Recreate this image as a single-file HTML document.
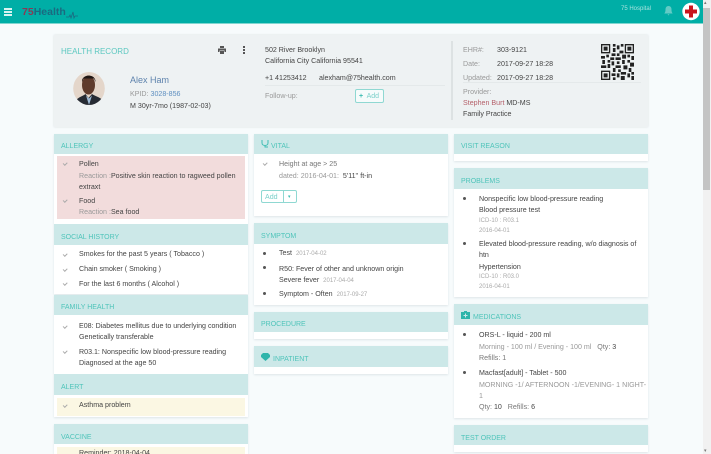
<!DOCTYPE html>
<html><head><meta charset="utf-8"><style>
html,body{margin:0;padding:0}
body{width:711px;height:454px;overflow:hidden;position:relative;background:#f7fbfc;font-family:"Liberation Sans",sans-serif;font-size:7.1px;color:#444}
#w{position:absolute;left:0;top:0;width:711px;height:454px;overflow:hidden;filter:blur(.3px)}
.b{position:absolute}
.t{position:absolute;white-space:nowrap;line-height:10px;height:10px;margin-top:1px}
.g{color:#999}.h{color:#4fc4ba;font-size:7px;margin-top:2px}.s{font-size:6px;color:#aaa}
.c{position:absolute;background:#fff;box-shadow:0 1px 2px #dde6e8}
.hd{position:absolute;background:#cce8e8}
.ck{position:absolute;width:3px;height:1.5px;border-left:1px solid #aaa;border-bottom:1px solid #aaa;transform:rotate(-45deg)}
.d{position:absolute;width:3px;height:3px;border-radius:50%;background:#555}
</style></head><body><div id="w">
<div class="b" style="left:0;top:0;width:703px;height:23px;background:#00aea6;border-bottom:1px solid #7fd6d0"></div>
<div class="b" style="left:4px;top:8px;width:8px;height:2px;background:#d8f3f1"></div>
<div class="b" style="left:4px;top:11px;width:8px;height:2px;background:#d8f3f1"></div>
<div class="b" style="left:4px;top:14px;width:8px;height:2px;background:#d8f3f1"></div>
<div class="t" style="left:22px;top:6px;font-size:10.5px;font-weight:bold;line-height:11px;height:11px"><span style="color:#8a3a55">75</span><span style="color:#1b6a80">Health</span></div>
<svg class="b" style="left:65px;top:10px" width="14" height="10"><path d="M1 7H4L5 5L6 8L8 2L9 8L10 6H13" fill="none" stroke="#1b6a80" stroke-width=".8"/></svg>
<div class="t" style="left:621px;top:3px;color:#a9e3df;font-size:6px">75 Hospital</div>
<svg class="b" style="left:664px;top:6px" width="9" height="10"><path d="M4.500 0C2.500 0 1.500 1.500 1.500 3.500C1.500 6 .8 7 .3 7.500H8.700C8.200 7 7.500 6 7.500 3.500C7.500 1.500 6.500 0 4.500 0ZM3.500 8.300H5.500L4.500 9.500Z" fill="#63cbc5"/></svg>
<svg class="b" style="left:682px;top:2px" width="18" height="19"><circle cx="9" cy="9.500" r="8.700" fill="#fff"/><path d="M7 3.500H11V7.500H15V11.500H11V15.500H7V11.500H3V7.500H7Z" fill="#c8161d"/></svg>
<div class="b" style="left:703px;top:0;width:8px;height:454px;background:#f1f1f1"></div>
<div class="b" style="left:703px;top:8px;width:7px;height:182px;background:#c4c4c4"></div>
<div class="t" style="left:704px;top:-3px;font-size:5px;color:#777">▴</div>
<div class="t" style="left:704px;top:445px;font-size:5px;color:#777">▾</div>

<div class="b" style="left:54px;top:35px;width:594px;height:92px;background:#eef2f3;box-shadow:0 0 2px #d8dfe0"></div>
<div class="t" style="left:61px;top:46px;font-size:8px;color:#5cc8c0">HEALTH RECORD</div>
<svg class="b" style="left:218px;top:46px" width="8" height="8"><path d="M2 0H6V2H2ZM0 2.500H8V6H6.500V4.500H1.500V6H0ZM2 5H6V8H2Z" fill="#555"/></svg>
<div class="b" style="left:243px;top:46px;width:2px;height:2px;background:#555;box-shadow:0 3px #555,0 6px #555"></div>
<svg class="b" style="left:73px;top:72px" width="32" height="35"><defs><clipPath id="a"><ellipse cx="16" cy="16.500" rx="15.800" ry="16.500"/></clipPath></defs><g clip-path="url(#a)"><rect width="32" height="35" fill="#e4d6ca"/><ellipse cx="15.500" cy="13" rx="6.500" ry="9.500" fill="#5f3b2c"/><path d="M9 10C8 2 23 1 22.500 10L21 6.500H10.500Z" fill="#1f1613"/><path d="M3 35V28C6 25 10 24 12.500 22L15.500 26L19 22C22 24 26 25 30 28V35Z" fill="#262b33"/><path d="M13 23.500L16 33L19 23.500L16 26.500Z" fill="#9fbbd6"/></g></svg>
<div class="t" style="left:130px;top:74px;font-size:9px;color:#5e83ad">Alex Ham</div>
<div class="t g" style="left:130px;top:88px">KPID: <span style="color:#5e8fc0">3028-856</span></div>
<div class="t" style="left:130px;top:100px">M 30yr-7mo (1987-02-03)</div>
<div class="t" style="left:265px;top:44px">502 River Brooklyn</div>
<div class="t" style="left:265px;top:55px">California City California 95541</div>
<div class="t" style="left:265px;top:72px">+1 41253412</div>
<div class="t" style="left:319px;top:72px">alexham@75health.com</div>
<div class="b" style="left:265px;top:85px;width:180px;height:1px;background:#e4e9ea"></div>
<div class="t g" style="left:265px;top:90px">Follow-up:</div>
<div class="b" style="left:355px;top:89px;width:27px;height:12px;border:1px solid #8fd8d2;border-radius:2px;background:#f6fbfb"></div>
<div class="t" style="left:359px;top:91px;color:#3cbcb2;font-size:7px"><b>+</b>&nbsp; <span style="color:#7bd0ca">Add</span></div>
<div class="b" style="left:451px;top:41px;width:2px;height:79px;background:#dde2e3"></div>
<div class="t g" style="left:463px;top:44px">EHR#:</div><div class="t" style="left:497px;top:44px">303-9121</div>
<div class="t g" style="left:463px;top:58px">Date:</div><div class="t" style="left:497px;top:58px">2017-09-27 18:28</div>
<div class="t g" style="left:463px;top:72px">Updated:</div><div class="t" style="left:497px;top:72px">2017-09-27 18:28</div>
<div class="b" style="left:463px;top:82px;width:178px;height:1px;background:#e4e9ea"></div>
<div class="t g" style="left:463px;top:86px">Provider:</div>
<div class="t" style="left:463px;top:97px"><span style="color:#b5606a">Stephen Burt</span> MD-MS</div>
<div class="t" style="left:463px;top:108px">Family Practice</div>
<svg class="b" style="left:601px;top:44px" width="33" height="36" viewBox="0 0 25 27" preserveAspectRatio="none"><rect width="25" height="27" fill="#eef2f3"/><path fill="#222" d="M0 0h7v7H0zM18 0h7v7h-7zM0 20h7v7H0zM9 0h2v2H9zM12 1h2v3h-2zM15 0h2v2h-2zM9 3h2v3H9zM14 5h3v2h-3zM8 7h3v2H8zM12 7h2v2h-2zM0 9h3v2H0zM4 8h2v2H4zM7 10h3v2H7zM11 10h4v2h-4zM16 8h3v3h-3zM20 8h2v2h-2zM23 9h2v3h-2zM1 12h2v3H1zM5 12h2v2H5zM8 13h2v3H8zM12 13h2v2h-2zM16 12h2v3h-2zM20 12h2v2h-2zM0 16h4v2H0zM5 15h2v3H5zM11 16h4v2h-4zM17 16h3v3h-3zM22 14h3v3h-3zM9 18h2v3H9zM13 19h2v2h-2zM21 18h2v3h-2zM8 22h3v2H8zM12 22h2v3h-2zM15 21h4v2h-4zM20 22h2v3h-2zM23 21h2v2h-2zM9 25h2v2H9zM15 24h3v3h-3zM23 24h2v3h-2z"/><path fill="#eef2f3" d="M1 1h5v5H1zM19 1h5v5h-5zM1 21h5v5H1z"/><path fill="#222" d="M2 2h3v3H2zM20 2h3v3h-3zM2 22h3v3H2z"/></svg>

<!-- left column -->
<div class="c" style="left:54px;top:134px;width:194px;height:160px"></div>
<div class="hd" style="left:54px;top:134px;width:194px;height:20px"></div>
<div class="t h" style="left:61px;top:140px">ALLERGY</div>
<div class="b" style="left:57px;top:156px;width:188px;height:63px;background:#f2dcdc"></div>
<div class="ck" style="left:63px;top:162px"></div><div class="t" style="left:79px;top:158px">Pollen</div>
<div class="t" style="left:79px;top:170px"><span class="g">Reaction :</span>Positive skin reaction to ragweed pollen</div>
<div class="t" style="left:79px;top:181px">extraxt</div>
<div class="ck" style="left:63px;top:199px"></div><div class="t" style="left:79px;top:195px">Food</div>
<div class="t" style="left:79px;top:206px"><span class="g">Reaction :</span>Sea food</div>
<div class="hd" style="left:54px;top:224px;width:194px;height:21px"></div>
<div class="t h" style="left:61px;top:231px">SOCIAL HISTORY</div>
<div class="ck" style="left:63px;top:253px"></div><div class="t" style="left:79px;top:248px">Smokes for the past 5 years ( Tobacco )</div>
<div class="ck" style="left:63px;top:268px"></div><div class="t" style="left:79px;top:263px">Chain smoker ( Smoking )</div>
<div class="ck" style="left:63px;top:282px"></div><div class="t" style="left:79px;top:278px">For the last 6 months ( Alcohol )</div>

<div class="c" style="left:54px;top:295px;width:194px;height:122px"></div>
<div class="hd" style="left:54px;top:295px;width:194px;height:20px"></div>
<div class="t h" style="left:61px;top:301px">FAMILY HEALTH</div>
<div class="ck" style="left:63px;top:325px"></div><div class="t" style="left:79px;top:320px">E08: Diabetes mellitus due to underlying condition</div>
<div class="t" style="left:79px;top:331px">Genetically transferable</div>
<div class="ck" style="left:63px;top:350px"></div><div class="t" style="left:79px;top:346px">R03.1: Nonspecific low blood-pressure reading</div>
<div class="t" style="left:79px;top:357px">Diagnosed at the age 50</div>
<div class="hd" style="left:54px;top:374px;width:194px;height:21px"></div>
<div class="t h" style="left:61px;top:381px">ALERT</div>
<div class="b" style="left:57px;top:398px;width:188px;height:18px;background:#fbf7e3"></div>
<div class="ck" style="left:63px;top:404px"></div><div class="t" style="left:79px;top:399px">Asthma problem</div>

<div class="c" style="left:54px;top:424px;width:194px;height:30px"></div>
<div class="hd" style="left:54px;top:424px;width:194px;height:20px"></div>
<div class="t h" style="left:61px;top:431px">VACCINE</div>
<div class="b" style="left:57px;top:447px;width:188px;height:7px;background:#fbf7e3;overflow:hidden"></div>
<div class="t" style="left:79px;top:447px;height:7px;overflow:hidden">Reminder: 2018-04-04</div>

<!-- middle column -->
<div class="c" style="left:254px;top:134px;width:194px;height:82px"></div>
<div class="hd" style="left:254px;top:134px;width:194px;height:20px"></div>
<svg class="b" style="left:261px;top:139px" width="8" height="9"><path d="M1 1V4C1 6 3 6.500 4 6.500C5 6.500 7 6 7 4V1M4 6.500V8H7" fill="none" stroke="#3fbdb3" stroke-width="1"/></svg>
<div class="t h" style="left:271px;top:140px">VITAL</div>
<div class="ck" style="left:263px;top:162px"></div><div class="t g" style="left:279px;top:158px;color:#777">Height at age &gt; 25</div>
<div class="t" style="left:279px;top:170px"><span class="g">dated: 2016-04-01:</span>&nbsp; 5'11'' ft-in</div>
<div class="b" style="left:261px;top:190px;width:34px;height:11px;border:1px solid #8fd8d2;border-radius:2px;background:#fff"></div>
<div class="b" style="left:283px;top:190px;width:1px;height:13px;background:#8fd8d2"></div>
<div class="t" style="left:265px;top:191px;color:#7bd0ca">Add</div>
<div class="t" style="left:288px;top:191px;color:#3cbcb2;font-size:5px">▾</div>
<div class="c" style="left:254px;top:223px;width:194px;height:82px"></div>
<div class="hd" style="left:254px;top:223px;width:194px;height:21px"></div>
<div class="t h" style="left:261px;top:230px">SYMPTOM</div>
<div class="d" style="left:263px;top:252px"></div><div class="t" style="left:279px;top:247px">Test &nbsp;<span class="s">2017-04-02</span></div>
<div class="d" style="left:263px;top:266px"></div><div class="t" style="left:279px;top:263px">R50: Fever of other and unknown origin</div>
<div class="t" style="left:279px;top:274px">Severe fever &nbsp;<span class="s">2017-04-04</span></div>
<div class="d" style="left:263px;top:292px"></div><div class="t" style="left:279px;top:288px">Symptom - Often &nbsp;<span class="s">2017-09-27</span></div>
<div class="c" style="left:254px;top:312px;width:194px;height:27px"></div>
<div class="hd" style="left:254px;top:312px;width:194px;height:20px"></div>
<div class="t h" style="left:261px;top:318px">PROCEDURE</div>
<div class="c" style="left:254px;top:346px;width:194px;height:28px"></div>
<div class="hd" style="left:254px;top:346px;width:194px;height:21px"></div>
<svg class="b" style="left:261px;top:353px" width="9" height="8"><path d="M0 2L2 0H7L9 2V4L4.500 8L0 4Z" fill="#2fb5ab"/></svg>
<div class="t h" style="left:273px;top:353px">INPATIENT</div>

<!-- right column -->
<div class="c" style="left:454px;top:134px;width:194px;height:27px"></div>
<div class="hd" style="left:454px;top:134px;width:194px;height:20px"></div>
<div class="t h" style="left:461px;top:140px">VISIT REASON</div>
<div class="c" style="left:454px;top:168px;width:194px;height:129px"></div>
<div class="hd" style="left:454px;top:168px;width:194px;height:21px"></div>
<div class="t h" style="left:461px;top:175px">PROBLEMS</div>
<div class="d" style="left:463px;top:197px"></div><div class="t" style="left:479px;top:193px">Nonspecific low blood-pressure reading</div>
<div class="t" style="left:479px;top:204px">Blood pressure test</div>
<div class="t s" style="left:479px;top:215px">ICD-10 : R03.1</div>
<div class="t s" style="left:479px;top:225px">2016-04-01</div>
<div class="d" style="left:463px;top:242px"></div><div class="t" style="left:479px;top:238px">Elevated blood-pressure reading, w/o diagnosis of</div>
<div class="t" style="left:479px;top:249px">htn</div>
<div class="t" style="left:479px;top:261px">Hypertension</div>
<div class="t s" style="left:479px;top:271px">ICD-10 : R03.0</div>
<div class="t s" style="left:479px;top:281px">2016-04-01</div>
<div class="c" style="left:454px;top:304px;width:194px;height:114px"></div>
<div class="hd" style="left:454px;top:304px;width:194px;height:21px"></div>
<svg class="b" style="left:461px;top:311px" width="9" height="8"><path d="M3 1V0H6V1H9V8H0V1ZM4 2.500V4H2.500V5H4V6.500H5V5H6.500V4H5V2.500Z" fill="#2fb5ab" fill-rule="evenodd"/></svg>
<div class="t h" style="left:473px;top:311px">MEDICATIONS</div>
<div class="d" style="left:463px;top:333px"></div><div class="t" style="left:479px;top:329px">ORS-L - liquid - 200 ml</div>
<div class="t" style="left:479px;top:341px"><span class="g">Morning - 100 ml / Evening - 100 ml</span> &nbsp; <span style="color:#777">Qty:</span> 3</div>
<div class="t" style="left:479px;top:352px;color:#777">Refills: 1</div>
<div class="d" style="left:463px;top:371px"></div><div class="t" style="left:479px;top:367px">Macfast[adult] - Tablet - 500</div>
<div class="t g" style="left:479px;top:379px">MORNING -1/ AFTERNOON -1/EVENING- 1 NIGHT-</div>
<div class="t g" style="left:479px;top:390px">1</div>
<div class="t" style="left:479px;top:401px"><span style="color:#777">Qty:</span> 10 &nbsp; <span style="color:#777">Refills:</span> 6</div>
<div class="c" style="left:454px;top:425px;width:194px;height:27px"></div>
<div class="hd" style="left:454px;top:425px;width:194px;height:20px"></div>
<div class="t h" style="left:461px;top:432px">TEST ORDER</div>
</div></body></html>
